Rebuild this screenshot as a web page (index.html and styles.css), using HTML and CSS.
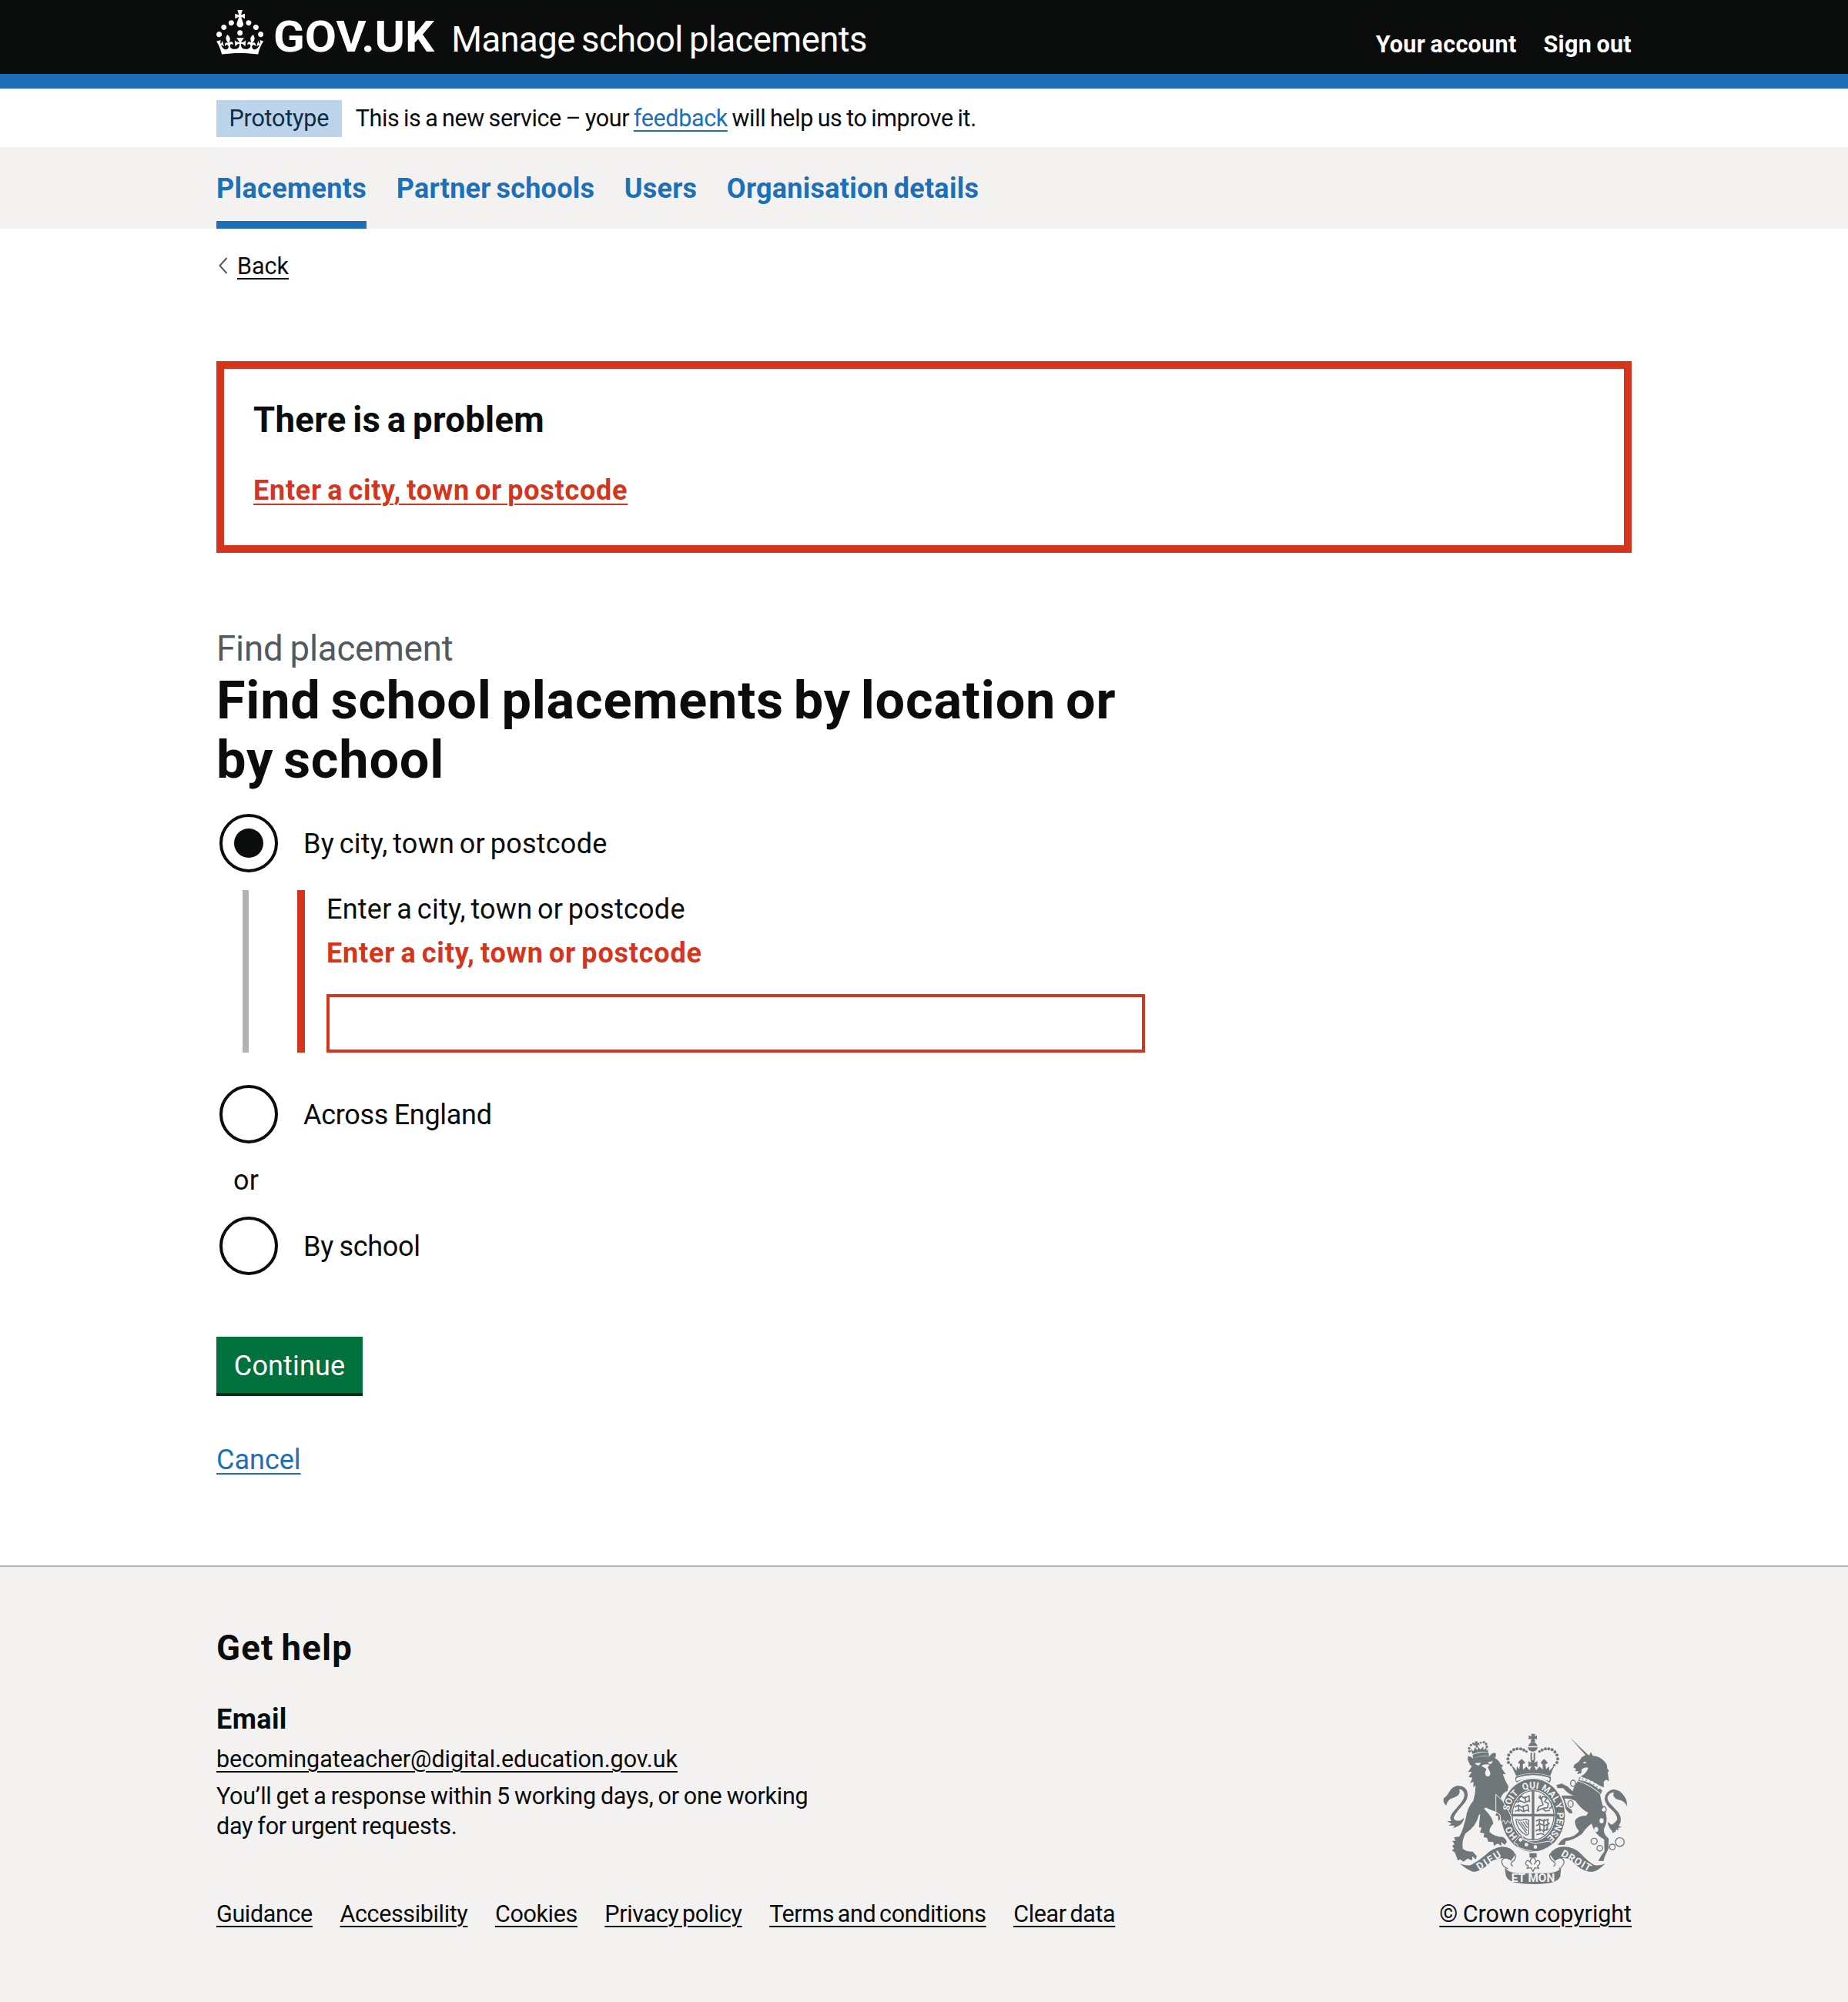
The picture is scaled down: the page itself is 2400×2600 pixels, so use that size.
FILE: index.html
```html
<!DOCTYPE html>
<html lang="en">
<head>
<meta charset="utf-8">
<title>Find school placements by location or by school</title>
<link rel="stylesheet" href="styles.css">
</head>
<body>
<header class="header">
  <div class="container header-inner">
    <svg class="crown" viewBox="0 0 32 30" aria-hidden="true"><path fill="#fff" d="M22.6 10.4c-1 .4-2-.1-2.4-1-.4-.9.1-2 1-2.4.9-.4 2 .1 2.4 1s-.1 2-1 2.4m4.900 3c-1 .4-2-.1-2.4-1-.4-.9.1-2 1-2.4.9-.4 2 .1 2.4 1s0 2-1 2.4m3.3 4.8c-1 .4-2-.1-2.4-1-.4-.9.1-2 1-2.4.9-.4 2 .1 2.4 1s-.1 2-1 2.4M17 4.700l2.300 1.200V2.500l-2.300.700-.2-.2.9-3h-3.400l.9 3-.2.2c-.1.1-2.300-.7-2.300-.7v3.400L15 4.700c.1.1.1.2.2.2l-1.300 4c-.1.2-.1.4-.1.6 0 1.100.8 2 1.900 2.200h.7c1-.2 1.900-1.100 1.900-2.100 0-.2 0-.4-.1-.6l-1.300-4c-.1-.2 0-.2.1-.3m-7.600 5.700c.9.4 2-.1 2.400-1 .4-.9-.1-2-1-2.400-.9-.4-2 .1-2.400 1s0 2 1 2.400m-5 3c.9.4 2-.1 2.400-1 .4-.9-.1-2-1-2.400-.9-.4-2 .1-2.400 1s.1 2 1 2.400m-3.200 4.800c.9.4 2-.1 2.400-1 .4-.9-.1-2-1-2.400-.9-.4-2 .1-2.400 1s0 2 1 2.400m14.800 11c4.400 0 8.600.3 12.300.8 1.100-4.500 2.400-7 3.700-8.800l-2.500-.9c.2 1.300.3 1.900 0 2.700-.4-.4-.8-1.100-1.100-2.300l-1.200 4c.7-.5 1.300-.8 2-.9-1.100 2.500-2.600 3.100-3.500 3-1.100-.2-1.700-1.200-1.500-2.100.3-1.200 1.500-1.500 2.100-.1 1.100-2.300-.8-3-2-2.300 1.900-1.900 2.100-3.500.6-5.600-2.100 1.600-2.100 3.200-1.200 5.500-1.200-1.400-3.200-.6-2.500 1.600.9-1.400 2.100-.5 1.900.8-.2 1.100-1.700 2.100-3.500 1.900-2.700-.2-2.900-2.100-2.900-3.600.7-.1 1.900.5 2.900 1.900l.4-4.300c-1.100 1.100-2.100 1.400-3.200 1.400.4-1.200 2.100-3 2.100-3h-5.400s1.700 1.900 2.100 3c-1.100 0-2.100-.2-3.200-1.400l.4 4.300c1-1.400 2.200-2 2.900-1.900-.1 1.500-.2 3.400-2.900 3.600-1.900.2-3.400-.8-3.500-1.900-.2-1.300 1-2.200 1.900-.8.7-2.300-1.200-3-2.500-1.600.9-2.200.9-3.900-1.200-5.500-1.500 2-1.300 3.700.6 5.600-1.200-.7-3.100 0-2 2.300.6-1.400 1.800-1.100 2.100.1.2.9-.3 1.900-1.500 2.100-.9.2-2.400-.5-3.500-3 .6 0 1.200.3 2 .9l-1.200-4c-.3 1.100-.7 1.900-1.100 2.300-.3-.8-.2-1.400 0-2.700l-2.900.9C1.300 23 2.600 25.500 3.700 30c3.700-.5 7.900-.8 12.300-.8"/><circle fill="#fff" cx="16" cy="15.500" r="1.800"/></svg>
    <svg class="wordmark" viewBox="0 0 208 96" role="img" aria-label="GOV.UK"><text class="wordmark-text" x="-2" y="66.500" textLength="209" lengthAdjust="spacingAndGlyphs">GOV.UK</text></svg>
    <span class="service-name">Manage school placements</span>
    <nav class="account"><a href="#">Your account</a><a href="#">Sign out</a></nav>
  </div>
</header>
<div class="container phase">
  <strong class="tag">Prototype</strong>
  <span class="phase-text">This is a new service – your <a class="link" href="#">feedback</a> will help us to improve it.</span>
</div>
<nav class="nav">
  <div class="container nav-inner">
    <a class="nav-item nav-current" href="#">Placements</a>
    <a class="nav-item" href="#">Partner schools</a>
    <a class="nav-item" href="#">Users</a>
    <a class="nav-item" href="#">Organisation details</a>
  </div>
</nav>
<main class="container">
  <div class="back"><svg class="chevron" viewBox="0 0 14 24" aria-hidden="true"><path d="M12.500 2 3.500 12l9 10" fill="none" stroke="#505a5f" stroke-width="2"/></svg><a class="link-dark" href="#">Back</a></div>
  <section class="error-summary">
    <h2 class="error-title">There is a problem</h2>
    <a class="error-link" href="#">Enter a city, town or postcode</a>
  </section>
  <form class="form">
    <span class="caption">Find placement</span>
    <h1 class="heading">Find school placements by location or by school</h1>
    <label class="radio"><span class="dial dial-on"></span><span class="radio-text">By city, town or postcode</span></label>
    <div class="conditional">
      <div class="group">
        <label class="field-label" for="place">Enter a city, town or postcode</label>
        <p class="field-error">Enter a city, town or postcode</p>
        <input class="input" id="place" type="text">
      </div>
    </div>
    <label class="radio radio-second"><span class="dial"></span><span class="radio-text radio-tight">Across England</span></label>
    <div class="divider">or</div>
    <label class="radio radio-third"><span class="dial"></span><span class="radio-text radio-tight">By school</span></label>
    <button class="button" type="button">Continue</button>
    <a class="link cancel" href="#">Cancel</a>
  </form>
</main>
<footer class="footer">
  <div class="container footer-inner">
    <div class="footer-left">
      <h2 class="help-title">Get help</h2>
      <h3 class="help-sub">Email</h3>
      <a class="link-dark email" href="#">becomingateacher@digital.education.gov.uk</a>
      <p class="help-text">You’ll get a response within 5 working days, or one working day for urgent requests.</p>
      <div class="footer-links">
        <a class="link-dark" href="#">Guidance</a>
        <a class="link-dark" href="#">Accessibility</a>
        <a class="link-dark" href="#">Cookies</a>
        <a class="link-dark" href="#">Privacy policy</a>
        <a class="link-dark" href="#">Terms and conditions</a>
        <a class="link-dark" href="#">Clear data</a>
      </div>
    </div>
    <div class="footer-right">
      <svg class="arms" viewBox="72 62 720 592" aria-hidden="true">
        <defs><path id="belt" d="M423 487A94 105 0 0 1 423 277A94 105 0 0 1 423 487"/></defs>
        <g class="ink">
          <!-- lion crown -->
          <path d="M187 147Q217 132 250 138L251 151Q218 146 190 161Z"/>
          <path d="M188 144L178 122L191 132L197 117L206 129L209 113L217 126L229 113L230 127L241 118L242 131L248 122L247 136Q215 129 188 144Z"/>
          <path d="M196 93l12 1-3 7 8-3 1 11-8-2 2 10-8 1-1-10-8 3-1-10 8 1z"/>
          <g><circle cx="175" cy="132" r="5"/><circle cx="174" cy="120" r="5"/><circle cx="181" cy="108" r="5"/><circle cx="190" cy="102" r="4"/><circle cx="219" cy="99" r="4"/><circle cx="231" cy="97" r="5"/><circle cx="240" cy="104" r="5"/><circle cx="243" cy="115" r="5"/></g>
          <!-- lion -->
          <path d="M170 151Q181 151 189 160Q218 147 252 153Q263 135 277 139Q281 151 274 158Q291 168 296 182L306 187L300 196Q310 213 317 222L305 221Q313 246 327 268L323 287Q305 292 297 315L316 337L335 391L337 415L325 404L319 413L310 399L302 412L297 394L288 404L286 384L276 382L282 369L262 362L244 354Q238 348 232 356Q267 391 268 414Q252 431 253 447Q274 466 305 466Q318 472 321 486L312 497L299 485L300 501L284 492L270 501L268 486L248 484L244 470L230 466L233 452L216 449L222 430L212 427L217 376L211 382Q202 424 160 452Q145 477 149 512Q163 524 188 523L204 541L199 553L187 541L185 558L168 550L152 562L139 553L130 558L118 526L107 519L115 511L108 501L117 494L108 481L120 481L115 467L135 465Q146 448 150 432L161 393Q165 355 190 325Q199 296 199 265L190 273L191 251L178 256L187 235L172 232L184 212L170 213L184 191L177 184L168 165Z"/>
          <path d="M85 343Q72 335 74 316Q86 310 96 291Q108 269 130 266Q163 266 168 296Q171 320 147 344Q119 375 113 392Q118 406 141 402L155 391Q148 417 130 424L111 432L117 422L94 421L105 414L87 405L104 404Q94 390 112 368L141 334Q158 314 155 297Q149 279 135 280Q144 303 111 314Q91 317 85 343Z"/>
          <!-- imperial crown -->
          <path d="M415 64h17l-3 10 9-4v16l-10-3 4 14h-19l4-14-11 3V70l12 4z"/>
          <path d="M404 112Q409 97 422 97Q436 97 440 112zM402 117H441Q439 132 422 134Q405 132 402 117z"/>
          <path d="M413 138h6v28h-6zM425 138h6v28h-6z"/>
          <path d="M337 184L350 197L358 208L360 190L369 202L372 181Q359 179 369 171L379 162L389 172Q397 180 383 182L384 203L397 192L409 206L417 189L405 194V171L417 177L413 166H431L427 177L440 171V194L427 189L435 206L448 192L461 203L460 182Q449 180 457 171L466 162L477 173Q485 180 471 182L474 202L484 190L487 208L507 184L490 228Q423 206 357 228Z"/>
          <path d="M357 230Q423 208 490 230Q497 240 487 255Q423 231 360 255Q349 241 357 230ZM365 234Q352 238 360 249Q423 225 485 249Q492 239 482 234Q423 216 365 234Z" fill-rule="evenodd"/>
          <g><circle cx="337" cy="185" r="5"/><circle cx="327" cy="176" r="6"/><circle cx="325" cy="162" r="6"/><circle cx="328" cy="147" r="6"/><circle cx="337" cy="135" r="6"/><circle cx="348" cy="126" r="6"/><circle cx="361" cy="123" r="6"/><circle cx="375" cy="123" r="6"/><circle cx="387" cy="127" r="6"/><circle cx="397" cy="133" r="5"/><circle cx="448" cy="133" r="5"/><circle cx="458" cy="127" r="6"/><circle cx="471" cy="123" r="6"/><circle cx="484" cy="123" r="6"/><circle cx="497" cy="126" r="6"/><circle cx="508" cy="135" r="6"/><circle cx="516" cy="147" r="6"/><circle cx="519" cy="162" r="6"/><circle cx="516" cy="176" r="6"/><circle cx="506" cy="186" r="5"/></g>
          <!-- unicorn -->
          <path d="M566 78L634 143L642 148L648 135L656 150Q681 151 697 168Q713 181 712 199L719 208L714 215L719 249L707 243L698 251L699 273L682 266Q650 246 608 230Q632 219 638 197Q626 191 612 203L611 218L594 221L600 209L586 210L591 200L580 196L584 184Q602 176 612 156L627 147Z"/>
          <path d="M603 233Q645 245 692 284L688 299Q645 259 600 247Z"/>
          <path d="M598 249Q643 264 684 298Q689 335 702 362Q716 391 705 421Q688 448 718 473L717 511L703 541L697 560L677 559L688 540L701 522L700 476Q662 457 651 414Q628 431 615 453Q582 479 549 483L548 496L520 497Q530 478 548 470Q590 466 602 442Q586 426 586 403Q598 382 630 383L638 371Q611 359 588 325Q560 313 545 317L556 349L573 360L577 374L564 373L543 350L528 323L534 305L581 304Q556 297 541 276L518 276L514 264L535 258L557 269L577 288Q585 263 598 249Z"/>
          <path d="M789 348Q790 322 779 308Q765 283 736 280Q702 288 702 319Q706 341 729 360Q751 380 751 398Q741 414 729 418L713 407Q718 431 731 443L732 451L744 445L747 437L756 440L755 430L768 428L757 423Q775 397 754 369L729 342Q711 325 713 311Q720 292 738 292Q729 311 755 321Q781 325 789 348Z"/>
          <g class="chain"><ellipse cx="579" cy="257" rx="10" ry="12"/><ellipse cx="569" cy="337" rx="10" ry="13"/><ellipse cx="698" cy="360" rx="10" ry="13"/><circle cx="661" cy="483" r="12"/><circle cx="683" cy="510" r="11"/><circle cx="732" cy="505" r="11"/><circle cx="761" cy="486" r="17"/></g>
          <!-- garter -->
          <ellipse class="halo" cx="423" cy="382" rx="126" ry="144"/>
          <path fill-rule="evenodd" d="M299 382A124 142 0 1 1 547 382A124 142 0 1 1 299 382ZM337 382A86 101 0 1 0 509 382A86 101 0 1 0 337 382Z"/>
          <ellipse class="line" cx="423" cy="382" rx="81" ry="96"/>
          <path d="M418 284h10v92h80v10h-80v92h-10v-92h-80v-10h80z"/>
          <path class="beasts" d="M365 317l14-10 9 8 21-9M355 330l20-4 14 6 21-8M370 307l-3 24M391 308l4 25M407 303l2 27M351 350l15-8 13 8 24-10M352 366l20-6 12 7 22-7M366 342l2 26M384 344l3 25M403 340l3 28"/>
          <path class="beasts" d="M434 404l15-7 13 7 22-7M434 422l18-7 16 7 20-9M433 442l17-6 14 6 20-8M436 457l17-4 14 4M449 396l-3 22M466 396l-2 24M480 398l1 24M449 420l1 25M466 420l-2 29M480 418l-5 24"/>
          <path class="beasts" d="M444 310l11 10 6-12 17 6-10 14 15 8-4 16-16 2M449 304l13 36-17 8-6 17 20-10 13 10 17-3M492 330q10 23-6 25"/>
          <path class="line" d="M356 397Q359 439 395 458Q408 459 406 445V402Q393 393 384 399Q370 404 356 397M364 405L398 452M374 407L399 442M384 406L401 431M394 404L402 417"/>
          <!-- lion paw over garter -->
          <path class="paw" d="M278 300L304 325L327 363L340 392L335 414L324 402L316 416L309 401L298 410L294 380L278 369Z"/>
          <path class="paw" d="M365 467Q371 457 383 464L380 475L430 492L486 482L500 494Q456 526 427 523Q393 518 367 507L360 494L348 489Z"/>
          <!-- ribbons -->
          <path d="M139 570Q163 580 181 575Q210 561 237 537Q261 511 300 504Q340 503 354 534L337 559Q321 547 302 549Q282 549 257 564Q227 598 193 602Q167 597 139 570Z"/>
          <path d="M704 570Q681 580 662 575Q641 565 610 532Q582 505 545 504Q507 503 488 533L508 560Q525 546 543 548Q567 551 590 574Q620 602 654 602Q678 598 704 570Z"/>
          <path class="line" d="M316 546Q296 553 302 568Q306 583 325 590M354 534Q359 552 340 564Q332 572 344 580M528 546Q547 553 543 568Q537 584 524 591M488 533Q484 552 507 565Q513 574 502 580"/>
          <path d="M313 587Q330 606 365 607H476Q517 606 532 587L529 621Q519 640 492 645Q423 656 350 643Q323 635 317 617Z"/>
          <path d="M409 529h28v17h-28z"/>
          <path class="fleur" d="M423 544Q442 560 427 573Q441 549 449 563Q452 572 440 579L445 588L430 586L423 600L415 586L400 588L405 579Q389 574 396 562Q405 550 418 573Q404 559 423 544Z"/>
        </g>
        <g class="paper">
          <path d="M196 178l24-1-8 10q-11 0-16-9zM247 175l18-5q-1 12-13 12zM221 189q16-10 33-4l-8 9 10 20q2 14-9 17-11-2-11-15l5-15z"/>
          <path d="M617 176q8-6 15 0l-8 4z"/>
          <path d="M604 240l8-8 3 11 12-8 2 14 12-9 3 15 12-8 1 17 13-7 0 17 15-6-5 13Q646 250 604 245z"/>
          <circle cx="397" cy="496" r="7"/><circle cx="432" cy="505" r="7"/><circle cx="374" cy="477" r="7"/>
          <ellipse cx="690" cy="403" rx="8" ry="10"/><ellipse cx="669" cy="437" rx="8" ry="10"/>
          <circle cx="579" cy="257" r="6"/><circle cx="569" cy="337" r="6"/><circle cx="698" cy="360" r="7"/>
        </g>
        <g class="motto">
          <text class="belt-text"><textPath href="#belt" startOffset="14.500%">HO</textPath></text>
          <text class="belt-text"><textPath href="#belt" startOffset="34%">SOIT</textPath></text>
          <text class="belt-text"><textPath href="#belt" startOffset="48.500%">QUI</textPath></text>
          <text class="belt-text"><textPath href="#belt" startOffset="61%">MAL</textPath></text>
          <text class="belt-text"><textPath href="#belt" startOffset="69.500%">Y</textPath></text>
          <text class="belt-text"><textPath href="#belt" startOffset="82%">PENSE</textPath></text>
          <text class="ribbon-text" transform="translate(257 569) rotate(-32)" textLength="104">DIEU</text>
          <text class="ribbon-text" transform="translate(585 570) rotate(30)" textLength="128">DROIT</text>
          <text class="ribbon-text ribbon-mid" x="423" y="641">ET MON</text>
        </g>
      </svg>
      <a class="link-dark copyright" href="#">© Crown copyright</a>
    </div>
  </div>
</footer>
</body>
</html>
```

FILE: styles.css
```css
* { box-sizing: border-box; }
body {
  margin: 0;
  min-height: 2600px;
  display: flex;
  flex-direction: column;
  background: #fff;
  color: #0b0c0c;
  font-family: Roboto, "Liberation Sans", sans-serif;
  font-size: 36px;
  line-height: 48px;
  letter-spacing: 0.25px;
  word-spacing: -2.5px;
}
h1, h2, h3, p { margin: 0; }
.container { width: 1838px; margin: 0 auto; }

.link, .link-dark, .error-link {
  text-decoration: underline;
  text-decoration-thickness: 2px;
  text-underline-offset: 5px;
}
.link { color: #1d70b8; }
.link-dark { color: #0b0c0c; }

.header { height: 115px; background: #0b0c0c; border-bottom: 19px solid #1d70b8; }
.header-inner { height: 96px; display: flex; align-items: flex-start; color: #fff; }
.crown { width: 61.3px; height: 57.5px; margin-top: 13px; }
.wordmark { width: 208px; height: 96px; margin-left: 15px; overflow: visible; }
.wordmark-text { font-weight: 700; font-size: 56px; letter-spacing: 0; fill: #fff; }
.service-name { margin: 28px 0 0 21px; font-size: 45.5px; letter-spacing: -0.6px; word-spacing: -2.4px; white-space: nowrap; }
.account { margin: 39px 0 0 auto; display: flex; gap: 35px; font-size: 30.5px; line-height: 38px; font-weight: 700; letter-spacing: 0.3px; word-spacing: -1.5px; }
.account a { color: #fff; text-decoration: none; }

.phase { height: 76px; padding-top: 15px; display: flex; gap: 18px; font-size: 30.5px; line-height: 48px; letter-spacing: -0.37px; word-spacing: -1.5px; }
.tag { height: 48px; padding: 0 16.5px; background: #bbd4ea; color: #0c2d4a; font-weight: 400; letter-spacing: -0.2px; }
.nav { height: 106px; background: #f3f2f1; }
.nav-inner { display: flex; gap: 38.5px; }
.nav-item { height: 106px; line-height: 108px; font-weight: 700; color: #1d70b8; text-decoration: none; letter-spacing: 0.25px; }
.nav-current { box-shadow: inset 0 -10px #1d70b8; letter-spacing: 0.35px; }

.back { margin-top: 29px; height: 38px; display: flex; align-items: center; gap: 12px; font-size: 30.5px; line-height: 39px; letter-spacing: 0; }
.chevron { width: 14px; height: 24px; margin-left: 1px; }
.error-summary { height: 249px; margin-top: 105px; padding: 43px 38px; border: 10px solid #d4351c; }
.error-title { font-size: 45.5px; line-height: 48px; margin-bottom: 43px; letter-spacing: 0.3px; word-spacing: -3px; }
.error-link { color: #d4351c; font-weight: 700; letter-spacing: 0.75px; }

.form { width: 1206px; margin-top: 96px; display: flex; flex-direction: column; align-items: flex-start; }
.caption { font-size: 45.5px; line-height: 57px; color: #505a5f; letter-spacing: -0.15px; word-spacing: -2px; }
.heading { padding-top: 1px; font-size: 68.5px; line-height: 76.6px; letter-spacing: 0.75px; word-spacing: -5px; }
.radio { margin: 32px 0 0 4px; display: flex; align-items: center; gap: 33px; }
.radio-text { padding-top: 2px; }
.radio-tight { letter-spacing: -0.3px; word-spacing: -1px; }
.dial { width: 76px; height: 76px; border: 4px solid #0b0c0c; border-radius: 50%; display: grid; place-items: center; }
.dial-on::before { content: ""; width: 38px; height: 38px; border-radius: 50%; background: #0b0c0c; }
.conditional { margin: 23px 0 0 34px; border-left: 8px solid #b1b4b6; padding-left: 63px; }
.group { border-left: 10px solid #d4351c; padding: 1px 0 0 28px; display: flex; flex-direction: column; }
.field-error { margin-top: 9px; color: #d4351c; font-weight: 700; letter-spacing: 0.8px; }
.input { width: 1063px; height: 76px; margin: 29px 0 0; border: 4px solid #d4351c; border-radius: 0; background: #fff; }
.radio-second { margin-top: 42px; }
.divider { margin: 23.5px 0 0 22px; }
.radio-third { margin-top: 23px; }
.button { margin-top: 80.5px; width: 190px; height: 73px; padding: 3px 0 0; border: 0; background: #00703c; box-shadow: 0 4px #002d18; color: #fff; font: inherit; letter-spacing: 0.15px; }
.cancel { margin-top: 62.5px; letter-spacing: 0; }

.footer { flex: 1; margin-top: 113.5px; border-top: 2px solid #b1b4b6; background: #f3f2f1; font-size: 30.5px; line-height: 38.3px; letter-spacing: -0.08px; }
.footer-inner { padding-top: 82px; display: flex; justify-content: space-between; align-items: flex-end; }
.footer-left { display: flex; flex-direction: column; align-items: flex-start; }
.help-title { font-size: 45.5px; line-height: 48px; letter-spacing: 1.2px; }
.help-sub { margin-top: 44px; font-size: 36px; line-height: 48px; letter-spacing: 0.4px; }
.email { margin-top: 9px; }
.help-text { width: 800px; margin-top: 10px; letter-spacing: -0.25px; word-spacing: -1.2px; }
.footer-links { margin-top: 76px; display: flex; gap: 35.5px; white-space: nowrap; letter-spacing: -0.36px; }
.footer-right { display: flex; flex-direction: column; align-items: center; gap: 19px; }
.copyright { letter-spacing: -0.05px; word-spacing: -1px; }
.arms { width: 240px; height: 197.3px; }
.ink { fill: #6f777b; }
.chain, .line, .beasts { fill: none; stroke: #6f777b; stroke-width: 4; }
.beasts { stroke-width: 5; stroke-linejoin: round; }
.fleur { fill: none; stroke: #6f777b; stroke-width: 4; }
.halo { fill: #f3f2f1; stroke: #f3f2f1; stroke-width: 6; }
.paw { stroke: #f3f2f1; stroke-width: 3; }
.paper { fill: #f3f2f1; }
.motto { fill: #f3f2f1; font-weight: 700; text-anchor: middle; letter-spacing: 0; word-spacing: 0; }
.belt-text { font-size: 36px; }
.ribbon-text { font-size: 40px; }
.ribbon-mid { font-size: 46px; }
```
